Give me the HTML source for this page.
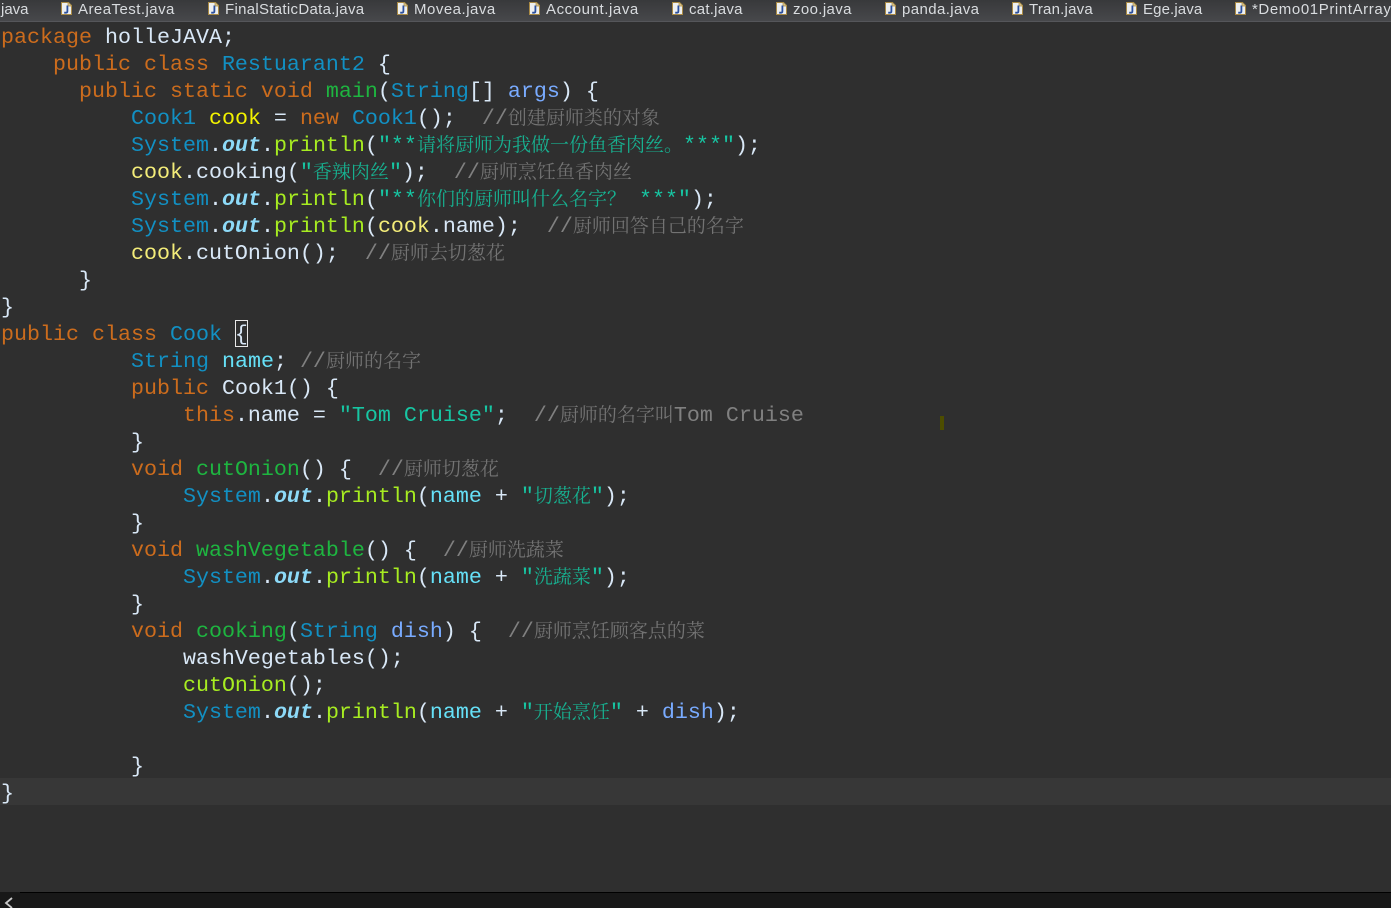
<!DOCTYPE html>
<html lang="zh"><head><meta charset="utf-8"><title>Cook.java</title>
<style>
html,body{margin:0;padding:0;width:1391px;height:908px;overflow:hidden;background:#2f2f2f}
#tabs{position:absolute;left:0;top:0;width:1391px;height:21px;background:linear-gradient(#38393b,#47484b);border-bottom:1px solid #55565a;overflow:hidden}
.t{position:absolute;top:0;font:15px/19px "Liberation Sans","DejaVu Sans",sans-serif;color:#d9dcdf;white-space:pre}
.i{position:absolute;top:2px;width:11px;height:13px}
#cur{position:absolute;left:0;top:778px;width:1391px;height:27px;background:#373737}
.l{position:absolute;height:27px;left:1px;margin-top:2px;font:21.667px/27px "Liberation Mono","DejaVu Sans Mono",monospace;color:#d9e8f7;white-space:pre}
.l b{font-weight:normal}
.k{color:#cc6c1d}.c{color:#1290c3}.m{color:#1eb540}.p{color:#a7ec21}.s{color:#17c6a3}
.g{color:#808080}.f{color:#66e1f8}.l b.o{color:#8ddaf8;font-style:italic;font-weight:bold}
.y{color:#f2f200}.v{color:#f3ec79}.a{color:#79abff}
i{font:normal 19px/0 "Noto Serif CJK SC","Noto Sans CJK SC",serif}
.s i{color:#17b090}.g i{color:#737373}
#box{position:absolute;left:235px;top:320px;width:11px;height:25px;border:1px solid #e8e8e8}
#mark{position:absolute;left:940px;top:416px;width:4px;height:14px;background:#4d4d00}
#bar{position:absolute;left:0;top:892px;width:1391px;height:16px;background:#181818}
#line{position:absolute;left:20px;top:892px;width:1371px;height:1px;background:#000}
</style></head><body>
<svg width="0" height="0" style="position:absolute"><defs><symbol id="d" viewBox="0 0 11 13"><path d="M.5.5H7.5L10.5 3.5V12.5H.5Z" fill="#eef0f0" stroke="#a98a45"/><path d="M7 .5V4H10.5" fill="#d9c68f" stroke="#a98a45" stroke-width=".7"/><path d="M6.4 3.5V9.2Q6.4 10.7 4.8 10.7H3.2" fill="none" stroke="#2b4f9e" stroke-width="1.8"/></symbol></defs></svg>
<div id="tabs">
<div class="t" style="left:1px">java</div>
<svg class="i" style="left:61px"><use href="#d"/></svg><div class="t" style="left:78px;letter-spacing:.46px">AreaTest.java</div>
<svg class="i" style="left:208px"><use href="#d"/></svg><div class="t" style="left:225px;letter-spacing:.3px">FinalStaticData.java</div>
<svg class="i" style="left:397px"><use href="#d"/></svg><div class="t" style="left:414px;letter-spacing:.5px">Movea.java</div>
<svg class="i" style="left:529px"><use href="#d"/></svg><div class="t" style="left:546px;letter-spacing:.58px">Account.java</div>
<svg class="i" style="left:672px"><use href="#d"/></svg><div class="t" style="left:689px;letter-spacing:.25px">cat.java</div>
<svg class="i" style="left:776px"><use href="#d"/></svg><div class="t" style="left:793px;letter-spacing:.37px">zoo.java</div>
<svg class="i" style="left:885px"><use href="#d"/></svg><div class="t" style="left:902px;letter-spacing:.4px">panda.java</div>
<svg class="i" style="left:1012px"><use href="#d"/></svg><div class="t" style="left:1029px;letter-spacing:.22px">Tran.java</div>
<svg class="i" style="left:1126px"><use href="#d"/></svg><div class="t" style="left:1143px;letter-spacing:.12px">Ege.java</div>
<svg class="i" style="left:1235px"><use href="#d"/></svg><div class="t" style="left:1252px;letter-spacing:.6px">*Demo01PrintArray</div>
</div>
<div id="cur"></div>
<div class="l" style="top:22px"><b class="k">package</b> holleJAVA;</div>
<div class="l" style="top:49px">    <b class="k">public class</b> <b class="c">Restuarant2</b> {</div>
<div class="l" style="top:76px">      <b class="k">public static void</b> <b class="m">main</b>(<b class="c">String</b>[] <b class="a">args</b>) {</div>
<div class="l" style="top:103px">          <b class="c">Cook1</b> <b class="y">cook</b> = <b class="k">new</b> <b class="c">Cook1</b>();  <b class="g">//<i>创建厨师类的对象</i></b></div>
<div class="l" style="top:130px">          <b class="c">System</b>.<b class="o">out</b>.<b class="p">println</b>(<b class="s">"**<i>请将厨师为我做一份鱼香肉丝。</i>***"</b>);</div>
<div class="l" style="top:157px">          <b class="v">cook</b>.cooking(<b class="s">"<i>香辣肉丝</i>"</b>);  <b class="g">//<i>厨师烹饪鱼香肉丝</i></b></div>
<div class="l" style="top:184px">          <b class="c">System</b>.<b class="o">out</b>.<b class="p">println</b>(<b class="s">"**<i>你们的厨师叫什么名字？</i> ***"</b>);</div>
<div class="l" style="top:211px">          <b class="c">System</b>.<b class="o">out</b>.<b class="p">println</b>(<b class="v">cook</b>.name);  <b class="g">//<i>厨师回答自己的名字</i></b></div>
<div class="l" style="top:238px">          <b class="v">cook</b>.cutOnion();  <b class="g">//<i>厨师去切葱花</i></b></div>
<div class="l" style="top:265px">      }</div>
<div class="l" style="top:292px">}</div>
<div class="l" style="top:319px"><b class="k">public class</b> <b class="c">Cook</b> {</div>
<div id="box"></div>
<div class="l" style="top:346px">          <b class="c">String</b> <b class="f">name</b>; <b class="g">//<i>厨师的名字</i></b></div>
<div class="l" style="top:373px">          <b class="k">public</b> Cook1() {</div>
<div class="l" style="top:400px">              <b class="k">this</b>.name = <b class="s">"Tom Cruise"</b>;  <b class="g">//<i>厨师的名字叫</i>Tom Cruise</b></div>
<div class="l" style="top:427px">          }</div>
<div class="l" style="top:454px">          <b class="k">void</b> <b class="m">cutOnion</b>() {  <b class="g">//<i>厨师切葱花</i></b></div>
<div class="l" style="top:481px">              <b class="c">System</b>.<b class="o">out</b>.<b class="p">println</b>(<b class="f">name</b> + <b class="s">"<i>切葱花</i>"</b>);</div>
<div class="l" style="top:508px">          }</div>
<div class="l" style="top:535px">          <b class="k">void</b> <b class="m">washVegetable</b>() {  <b class="g">//<i>厨师洗蔬菜</i></b></div>
<div class="l" style="top:562px">              <b class="c">System</b>.<b class="o">out</b>.<b class="p">println</b>(<b class="f">name</b> + <b class="s">"<i>洗蔬菜</i>"</b>);</div>
<div class="l" style="top:589px">          }</div>
<div class="l" style="top:616px">          <b class="k">void</b> <b class="m">cooking</b>(<b class="c">String</b> <b class="a">dish</b>) {  <b class="g">//<i>厨师烹饪顾客点的菜</i></b></div>
<div class="l" style="top:643px">              washVegetables();</div>
<div class="l" style="top:670px">              <b class="p">cutOnion</b>();</div>
<div class="l" style="top:697px">              <b class="c">System</b>.<b class="o">out</b>.<b class="p">println</b>(<b class="f">name</b> + <b class="s">"<i>开始烹饪</i>"</b> + <b class="a">dish</b>);</div>
<div class="l" style="top:751px">          }</div>
<div class="l" style="top:778px">}</div>
<div id="mark"></div>
<div id="bar"></div><div id="line"></div>
<svg style="position:absolute;left:4px;top:897px" width="9" height="11"><path d="M8 1L2 6L8 11" fill="none" stroke="#c8c8c8" stroke-width="1.8"/></svg>
</body></html>
